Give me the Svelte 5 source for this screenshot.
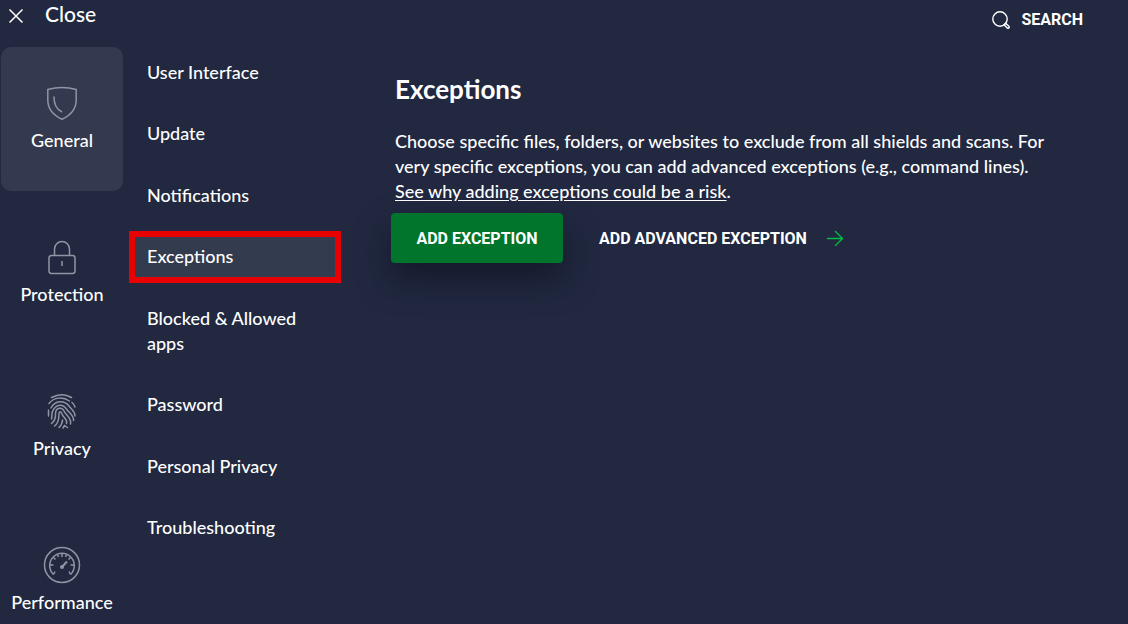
<script lang="ts">
	type Section = { id: string; label: string };

	const sections: Section[] = [
		{ id: 'general', label: 'General' },
		{ id: 'protection', label: 'Protection' },
		{ id: 'privacy', label: 'Privacy' },
		{ id: 'performance', label: 'Performance' }
	];

	const pages = [
		'User Interface',
		'Update',
		'Notifications',
		'Exceptions',
		'Blocked & Allowed apps',
		'Password',
		'Personal Privacy',
		'Troubleshooting'
	];

	let activeSection = $state('general');
	let activePage = $state('Exceptions');
</script>

<div class="settings">
	<header class="topbar">
		<button class="close" type="button">
			<svg width="16" height="16" viewBox="0 0 16 16" aria-hidden="true">
				<path d="M1.5 1.5l13 13M14.5 1.5l-13 13" />
			</svg>
			<span>Close</span>
		</button>
		<button class="search" type="button">
			<svg width="20" height="20" viewBox="0 0 20 20" aria-hidden="true">
				<circle cx="9" cy="9" r="7.2" />
				<path d="M13 14.800l1.600-1.600 3.300 3q.8 1 0 1.700-.8.7-1.700 0z" />
			</svg>
			<span>SEARCH</span>
		</button>
	</header>

	<div class="body">
		<nav class="sections" aria-label="Sections">
			{#each sections as section}
				<button
					class="section"
					class:active={section.id === activeSection}
					type="button"
					onclick={() => (activeSection = section.id)}
				>
					<svg width="38" height="38" viewBox="0 0 38 38" aria-hidden="true">
						{#if section.id === 'general'}
							<path d="M4.800 5.500Q19 1.500 33.200 5.500V16C33.200 25 27 31.500 19 35.300 11 31.500 4.800 25 4.800 16Z" />
							<path d="M11 12.500C10.800 19.500 13 25 19 28" />
						{:else if section.id === 'protection'}
							<rect x="6" y="17.500" width="26" height="18" rx="2.500" />
							<path d="M11.500 17.500V11a7.500 7.500 0 0 1 15 0V17.500M19 23v5" />
						{:else if section.id === 'privacy'}
							<g class="print">
								<path d="M8.500 5.500Q19 0 28.500 5.500" />
								<path d="M6 11.500C11 5 20 4.500 26.500 9" />
								<path d="M29 10.500Q31.500 12.500 32 15" />
								<path d="M8 16C12 8 21.500 8 26 14 28.500 17.500 32 19 32 24" />
								<path d="M5.500 18V24" />
								<path d="M8.500 27C9.500 23 8 20.500 10.500 17.500 14 11.500 20.500 12 23.500 17 26.500 21.500 31 23 30.500 28.500" />
								<path d="M8.500 31.500Q13 28 12.500 21.500C13 15 19 15 21 19 23 23.500 29 26 27.500 32" />
								<path d="M11.500 34C17 29.500 15.500 25.500 16 21.500 16.500 19 18 19.500 18.500 21 20 26 25 27 23.500 31.500" />
								<path d="M16 35.500Q19.500 32 19.500 28M20 36L21.500 33.500 24.500 35.500" />
							</g>
						{:else}
							<circle cx="19" cy="19" r="17.500" />
							<path d="M10.500 28.500A12.300 12.300 0 1 1 27.500 28.500" />
							<path d="M10.500 28.500l1.500-3M27.500 28.500l-1.500-3M7 19h3.500M31 19H27.500M19 7.500V11M10.500 11.500l2 2M27.500 11.500l-2 2M14.500 8.500l1 2.500M23.500 8.500l-1 2.500" />
							<path class="needle" d="M19 21l5-5.500" />
							<circle class="dot" cx="19" cy="21" r="2" />
						{/if}
					</svg>
					<span>{section.label}</span>
				</button>
			{/each}
		</nav>

		<nav class="pages" aria-label="Pages">
			{#each pages as page}
				<button
					class="page"
					class:active={page === activePage}
					type="button"
					onclick={() => (activePage = page)}
				>
					{page}
				</button>
			{/each}
		</nav>

		<main class="content">
			<h1>Exceptions</h1>
			<p>
				Choose specific files, folders, or websites to exclude from all shields and scans. For
				very specific exceptions, you can add advanced exceptions (e.g., command lines).<br />
				<a href="#risk">See why adding exceptions could be a risk</a>.
			</p>
			<div class="actions">
				<button class="primary" type="button">ADD EXCEPTION</button>
				<button class="advanced" type="button">
					<span>ADD ADVANCED EXCEPTION</span>
					<svg width="16" height="16" viewBox="0 0 16 16" aria-hidden="true">
						<path d="M0 8.500H15M8 1l7.500 7.500L8 16" />
					</svg>
				</button>
			</div>
		</main>
	</div>
</div>

<style>
	:global(body) {
		margin: 0;
		background: #212840;
	}

	.settings {
		display: flex;
		flex-direction: column;
		height: 100vh;
		overflow: hidden;
		color: #fff;
		background: #212840;
		font-family: Lato, 'Open Sans', sans-serif;
		font-size: 18px;
		font-weight: 500;
		line-height: 25px;
	}

	button {
		margin: 0;
		padding: 0;
		border: 0;
		background: none;
		color: inherit;
		font: inherit;
		cursor: pointer;
	}

	svg {
		flex: none;
		fill: none;
		stroke: #fff;
	}

	.topbar {
		display: flex;
		flex: none;
		justify-content: space-between;
		align-items: flex-start;
		box-sizing: border-box;
		height: 47px;
		padding: 0 45px 0 8px;
	}

	.close,
	.search {
		display: flex;
	}

	.close {
		gap: 21px;
		align-items: flex-end;
		font-size: 21px;
		line-height: 27px;
	}

	.close svg {
		margin-bottom: 3px;
		stroke-width: 1.5;
	}

	.search {
		gap: 10px;
		align-items: center;
		padding-top: 7px;
	}

	.search svg {
		stroke-width: 1.4;
	}

	.search,
	.actions {
		font-family: Roboto, Lato, sans-serif;
		font-size: 16px;
		font-weight: 700;
	}

	.body {
		display: flex;
		flex: 1;
		align-items: flex-start;
		min-height: 0;
	}

	.sections {
		display: flex;
		flex: none;
		flex-direction: column;
		gap: 10px;
		width: 122px;
		padding: 0 6px 0 1px;
	}

	.section {
		display: flex;
		flex-direction: column;
		align-items: center;
		gap: 6px;
		box-sizing: border-box;
		height: 144px;
		padding-top: 37px;
		border-radius: 10px;
	}

	.section svg {
		stroke: #8f95a3;
		stroke-width: 1.5;
	}

	.section .dot {
		fill: #8f95a3;
		stroke: none;
	}

	.section .needle {
		stroke-width: 2;
	}

	.print {
		stroke-linecap: round;
	}

	.section.active {
		background: #333a4f;
	}

	.pages {
		display: flex;
		flex: none;
		flex-direction: column;
		justify-content: space-between;
		width: 212px;
		min-height: 507px;
	}

	.page {
		padding: 7px 24px 8px 12px;
		border: 6px solid transparent;
		text-align: left;
	}

	.page.active {
		border-color: #e90000;
		background: #333b4f;
	}

	.content {
		flex: 1;
		min-width: 0;
		padding: 24px 60px 0 54px;
	}

	h1 {
		margin: 0;
		font-size: 26px;
		font-weight: 700;
		line-height: 36px;
	}

	p {
		margin: 22px 0 9px;
	}

	a {
		color: inherit;
		text-underline-offset: 2px;
	}

	.actions {
		display: flex;
		align-items: center;
		gap: 36px;
		margin-left: -4px;
	}

	.primary {
		min-width: 172px;
		height: 50px;
		border-radius: 4px;
		background: #00752b;
		box-shadow: 0 16px 32px rgba(14, 17, 28, 0.6);
	}

	.advanced {
		display: flex;
		align-items: center;
		gap: 20px;
	}

	.advanced svg {
		stroke: #00c043;
		stroke-width: 1.3;
	}
</style>
